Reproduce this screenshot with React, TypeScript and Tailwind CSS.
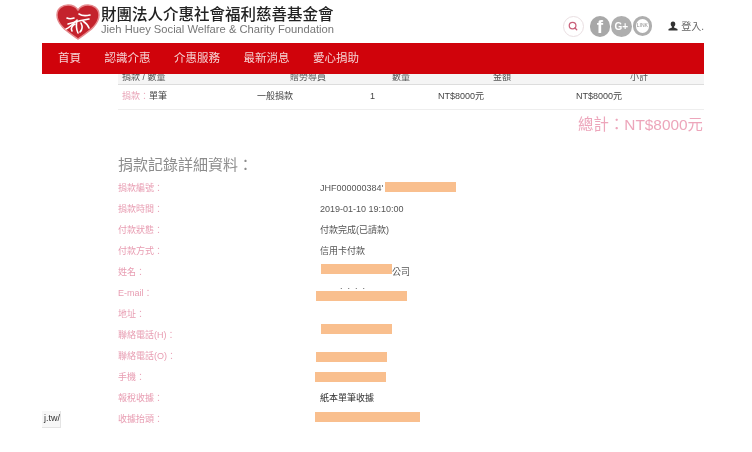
import { Search } from "lucide-react";

const font = { fontFamily: '"Liberation Sans", "Noto Sans CJK TC", sans-serif' };

const navItems = ["首頁", "認識介惠", "介惠服務", "最新消息", "愛心捐助"];

// bar: left offset, width and vertical shift of the orange censor block
const rows: { label: string; value?: string; after?: string; bar?: [number, number, number]; strong?: boolean; peek?: boolean }[] = [
  { label: "捐款編號：", value: "JHF000000384'", bar: [2, 71, -2] },
  { label: "捐款時間：", value: "2019-01-10 19:10:00" },
  { label: "付款狀態：", value: "付款完成(已請款)" },
  { label: "付款方式：", value: "信用卡付款" },
  { label: "姓名：", bar: [1, 71, -4], after: "公司" },
  { label: "E-mail：", bar: [-4, 91, 2], peek: true },
  { label: "地址：" },
  { label: "聯絡電話(H)：", bar: [1, 71, -7] },
  { label: "聯絡電話(O)：", bar: [-4, 71, 0] },
  { label: "手機：", bar: [-5, 71, -1] },
  { label: "報稅收據：", value: "紙本單筆收據", strong: true },
  { label: "收據抬頭：", bar: [-5, 105, -3] },
];

function Logo() {
  return (
    <svg width="44" height="36" viewBox="0 0 44 36" className="shrink-0">
      <path
        d="M22 35C14 29 1 22 1 11C1 4 7 1 12 1C17 1 20 3 22 6C24 3 27 1 32 1C37 1 43 4 43 11C43 22 30 29 22 35Z"
        fill="#c4222c"
        stroke="#e58a8e"
        strokeWidth="1.5"
      />
      <g fill="none" stroke="#fff" strokeWidth="1.6" strokeLinecap="round">
        <path d="M11 14C13 15 15 15 18 14" />
        <path d="M23 10C26 12 30 12 34 11" />
        <path d="M12 20C18 18 26 16 33 15" />
        <path d="M20 17C16 21 13 24 10 25" />
        <path d="M16 27C14 24 17 21 19 20" />
        <path d="M21 16C20 21 20 25 22 29" />
        <path d="M25 19C27 23 26 26 24 28" />
        <path d="M27 17C30 19 32 21 33 24" />
      </g>
    </svg>
  );
}

function SocialIcons() {
  return (
    <div className="flex items-center">
      <div className="flex h-[21px] w-[21px] items-center justify-center rounded-full border border-[#eadfe2] bg-white">
        <Search size={10} strokeWidth={3} className="text-[#c9607a]" />
      </div>
      <div className="ml-[6px] flex h-[21px] w-[21px] items-end justify-center overflow-hidden rounded-full bg-[#a8a8a8] text-[19px] font-bold leading-[20px] text-white">
        f
      </div>
      <div className="ml-px flex h-[21px] w-[21px] items-center justify-center rounded-full bg-[#aeaeae] text-[10px] font-bold text-white">
        G+
      </div>
      <div className="ml-px flex h-[20px] w-[20px] items-center justify-center rounded-full border-[3px] border-[#aeaeae] bg-white text-[5px] text-[#8c8c8c]">
        LINK
      </div>
      <svg width="10" height="10" viewBox="0 0 10 10" className="ml-[16px] shrink-0">
        <path d="M5 0.5C6.6 0.5 7.4 1.7 7.3 3.2C7.2 4.4 6.6 5.3 6 5.7L6 6.5L9.5 8L9.5 9.5L0.5 9.5L0.5 8L4 6.5L4 5.7C3.4 5.3 2.8 4.4 2.7 3.2C2.6 1.7 3.4 0.5 5 0.5Z" fill="#333" />
      </svg>
      <span className="ml-[3px] whitespace-nowrap text-[10px] text-[#666]">登入.</span>
    </div>
  );
}

export default function App() {
  return (
    <div className="h-[452px] w-[752px] overflow-hidden bg-white blur-[0.3px]" style={font}>
      <div className="relative ml-[42px] h-[452px] w-[662px] overflow-hidden">
        <header className="flex h-[43px] items-center justify-between">
          <div className="ml-[14px] flex items-center">
            <Logo />
            <div className="ml-px -mt-[4px]">
              <div className="text-[15.5px] font-medium leading-[19px] text-[#222]">財團法人介惠社會福利慈善基金會</div>
              <div className="whitespace-nowrap text-[11.2px] leading-[10px] text-[#777]">
                Jieh Huey Social Welfare &amp; Charity Foundation
              </div>
            </div>
          </div>
          <div className="mt-[9px] w-[141px]">
            <SocialIcons />
          </div>
        </header>

        <nav className="flex h-[31px] items-center gap-[23.5px] bg-[#d0030b] pl-[16px] text-[11.5px] text-[#f5d3d3]">
          {navItems.map((item) => (
            <span key={item}>{item}</span>
          ))}
        </nav>

        <div className="ml-[76px]">
          <div className="grid h-[11px] grid-cols-[135px_113px_68px_138px_1fr] overflow-hidden border-b border-[#ddd] bg-[#f5f5f5] pl-[4px] text-[9px] leading-[6px] text-[#555]">
            <span>捐款 / 數量</span>
            <span className="pl-[33px]">贈勞導員</span>
            <span className="pl-[22px]">數量</span>
            <span className="pl-[55px]">金額</span>
            <span className="pl-[54px]">小計</span>
          </div>
          <div className="grid h-[25px] grid-cols-[135px_113px_68px_138px_1fr] items-center border-b border-[#eee] pl-[4px] text-[9px] text-[#444]">
            <span>
              <span className="text-[#e9a5b8]">捐款：</span>單筆
            </span>
            <span>一般捐款</span>
            <span>1</span>
            <span>NT$8000元</span>
            <span>NT$8000元</span>
          </div>

          <div className="mt-[5px] pr-[1px] text-right text-[15.4px] leading-[20px] text-[#eda6bb]">總計：NT$8000元</div>

          <h2 className="mt-[19px] text-[15px] leading-[22px] text-[#8c8c8c]">捐款記錄詳細資料：</h2>

          <div className="mt-[2px]">
            {rows.map((row) => (
              <div key={row.label} className="grid h-[21px] grid-cols-[202px_1fr] items-center text-[9px]">
                <span className="text-[#e89db2]">{row.label}</span>
                <span className={`relative flex items-center ${row.strong ? "text-[#333]" : "text-[#555]"}`}>
                  {row.value}
                  {row.peek && <span className="absolute left-[20px] -top-[9px] tracking-[5px]">....</span>}
                  {row.bar && (
                    <span
                      className="relative inline-block h-[10px] bg-[#f9bf8e]"
                      style={{ marginLeft: row.bar[0], width: row.bar[1], transform: `translateY(${row.bar[2]}px)` }}
                    />
                  )}
                  {row.after}
                </span>
              </div>
            ))}
          </div>
        </div>

        <div className="absolute left-0 top-[411px] h-[17px] w-[19px] overflow-hidden border-r border-b border-[#e4e4e4] bg-[#f7f7f7] text-right text-[9px] leading-[15px] text-[#333]">
          j.tw/
        </div>
      </div>
    </div>
  );
}
